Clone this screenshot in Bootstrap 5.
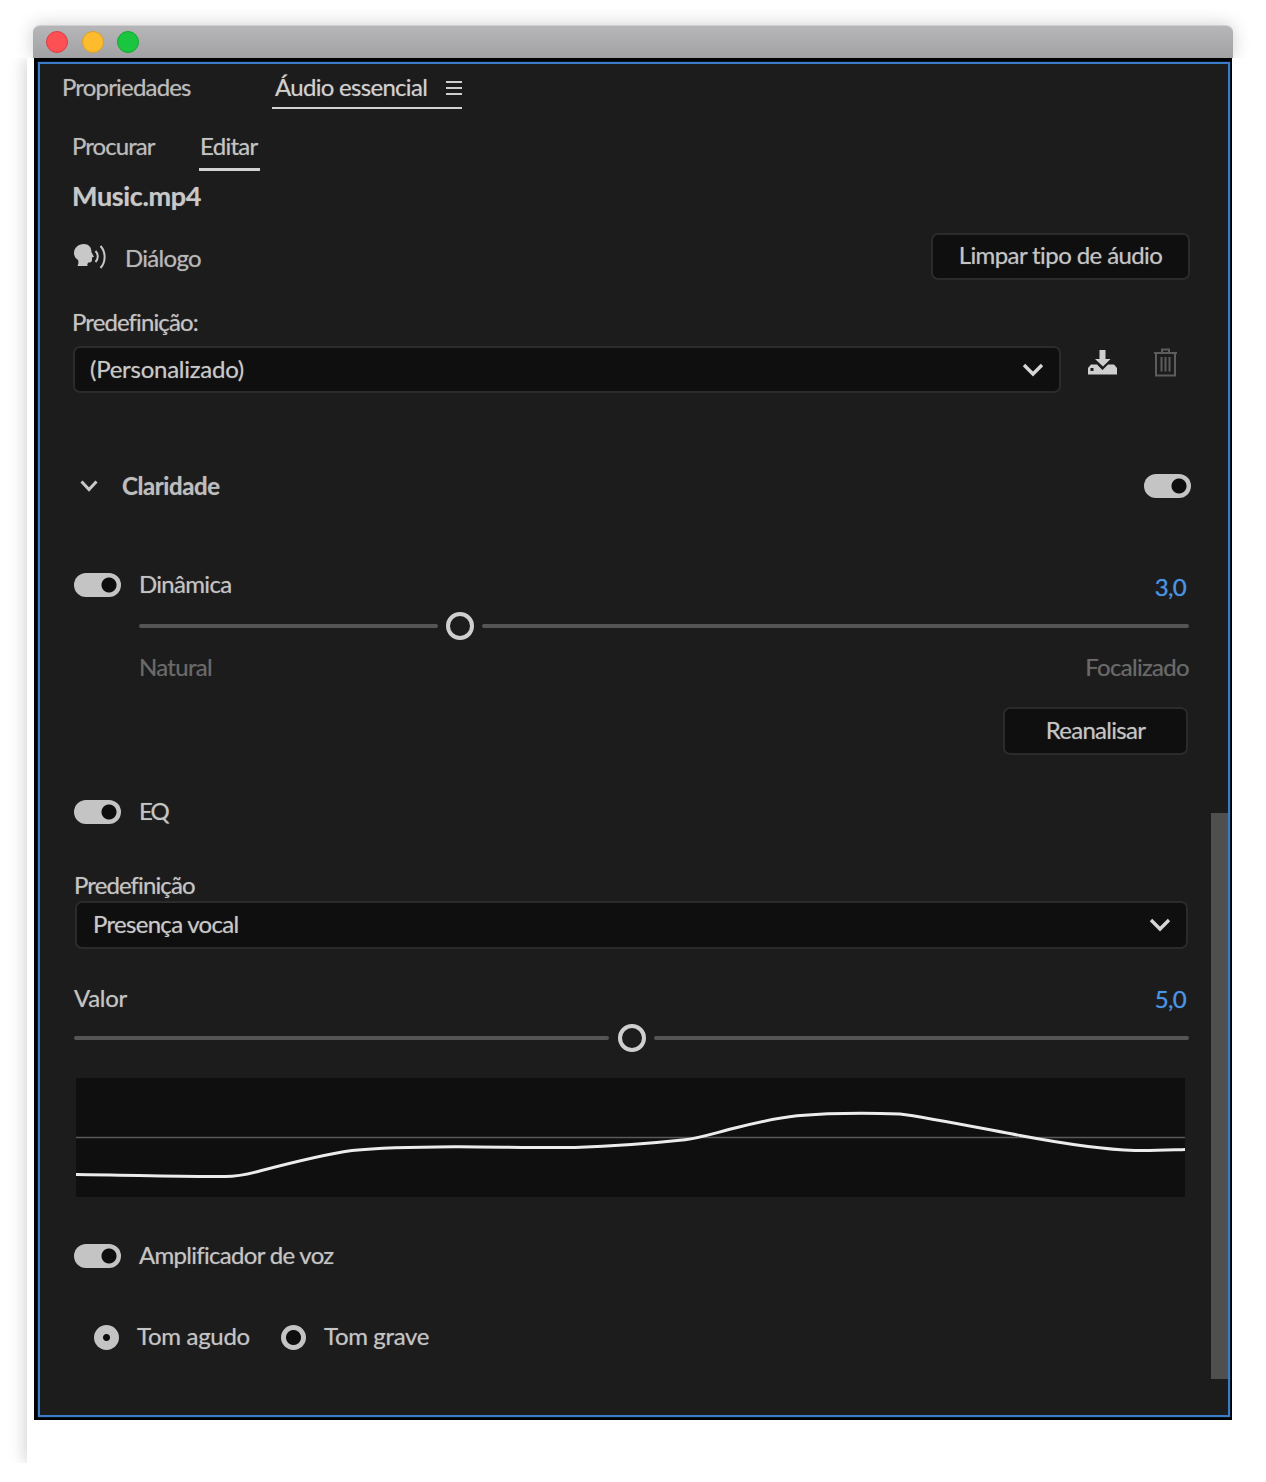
<!DOCTYPE html>
<html lang="pt">
<head>
<meta charset="utf-8">
<title>Áudio essencial</title>
<link href="https://cdn.jsdelivr.net/npm/bootstrap@5.3.0/dist/css/bootstrap.min.css" rel="stylesheet">
<style>
html,body{background:#fff;margin:0;height:1482px;overflow:hidden}
body{font-family:"Lato","Liberation Sans",sans-serif;font-size:24px;letter-spacing:-.7px;color:#c4c4c4;text-shadow:0 0 1px rgba(190,190,190,.55)}
.stage{padding:25px 0 0 27px;width:1233px}
.titlebar{margin-left:6px;width:1200px;height:33px;border-radius:7px 7px 0 0;background:linear-gradient(#b6b6b8,#a2a2a4);border-top:1px solid #cfcfcf;box-shadow:0 0 18px rgba(0,0,0,.2);clip-path:inset(-30px -30px 0 -30px);gap:14px;padding-left:13px}
.light{width:22px;height:22px;border-radius:50%;flex:none}
.l-r{background:#fc5055;border:1px solid #dc3c42}
.l-y{background:#fdbb2e;border:1px solid #dfa023;margin:0 -.5px}
.l-g{background:#1ac63f;border:1px solid #12a82e}
.sheet{width:1206px;height:1405px;padding-left:7px;background:#fff;box-shadow:-2px 0 16px rgba(0,0,0,.18);clip-path:inset(0 0 0 -30px)}
.shell{width:1198px;height:1362px;background:#000;padding:4px 2px 3px 4px}
.pane{height:100%;border:2px solid #3a7cc8;box-shadow:0 0 1px #3a7cc8;background:#1c1c1c;padding:0 38px 0 33px;overflow:hidden}
.scroll-thumb{position:absolute;right:0;top:749px;width:17px;height:566px;background:#4f4f4f}
.tabs-main{height:41px;margin-top:4px;margin-left:-11px}
.tab-a{height:41px;color:#bcbcbc;padding:0;line-height:37px;width:210px;letter-spacing:-.82px}
.tab-b{height:41px;width:190px;border-bottom:2px solid #d2d2d2;color:#d0d0d0;padding-left:3px;line-height:37px}
.tabs-sub{height:46px;margin-top:16px;margin-left:-1px}
.sub-a{height:46px;line-height:42px;width:127px;color:#bcbcbc;letter-spacing:-.95px}
.sub-b{height:46px;line-height:42px;width:61px;border-bottom:3px solid #d2d2d2;color:#c4c4c4;padding-left:1px}
.file-name{height:40px;line-height:40px;margin:5px 0 0 -1px;font-weight:700;font-size:27px;color:#c8c8c8;letter-spacing:-.35px}
.dlg-row{height:47px;margin-top:17px}
.dlg-label{gap:17px;color:#b8b8b8}
.dlg-label span{padding-top:2px}
.act{background:#0f0f0f;border:2px solid #2b2b2b;border-radius:7px;color:#c4c4c4;font-size:24px;letter-spacing:-.7px;padding:0 0 2px;height:48px;text-shadow:0 0 1px rgba(190,190,190,.55)}
.act:hover{background:#0f0f0f;color:#c4c4c4;border-color:#2b2b2b}
.act-clear{width:259px;height:47px;letter-spacing:-.6px;padding-bottom:4px}
.lbl{height:30px;line-height:28px;letter-spacing:-.9px}
.lbl-pre{margin:28px 0 0 -1px}
.sel-row{height:47px;margin-top:8px}
.pick{background-color:#0f0f0f;color:#c8c8c8;border:2px solid #2b2b2b;border-radius:7px;font-size:24px;letter-spacing:-.7px;padding:0 60px 2px 15px;background-position:right 14px center;background-size:24px 14px;background-image:url("data:image/svg+xml,%3csvg xmlns='http://www.w3.org/2000/svg' viewBox='0 0 24 14'%3e%3cpath fill='none' stroke='%23d6d6d6' stroke-width='3.4' d='M3 2l9 9 9-9'/%3e%3c/svg%3e");text-shadow:0 0 1px rgba(190,190,190,.55)}
.pick:focus{background-color:#0f0f0f;color:#c8c8c8;border-color:#2b2b2b;box-shadow:none}
.pick-a{width:988px;height:47px;letter-spacing:-.25px}
.pick-b{height:48px;padding-left:16px}
.tools{gap:36px;margin-left:27px;height:47px;padding-bottom:14px}
.sec-row{height:24px;margin-top:81px;margin-right:-1px}
.sec-name{gap:24px;padding-left:7px;font-weight:700;color:#bdbdbd;letter-spacing:-.4px}
.form-check-input.sw{width:47px;height:24px;margin:0;flex:none;border:0;border-radius:12px;appearance:none;background:radial-gradient(circle at 35px 12px,#0e0e0e 0,#0e0e0e 7px,#c4c4c4 8px)}
.form-check-input.sw:focus{box-shadow:none;border:0}
.opt-row{height:24px;gap:18px;margin-left:1px}
.lift{margin-top:-2px}
.m-dyn{margin-top:75px}
.m-eq{margin-top:45px}
.m-amp{margin-top:47px}
.val{color:#4a94e6;margin-left:auto;margin-right:4px;text-shadow:0 0 1px rgba(74,148,230,.7)}
.val-dyn{margin-top:3px}
.eq-name{letter-spacing:-2px}
.track{height:26px}
.track-a{margin:16px 1px 0 66px}
.track-b{margin:11px 1px 0 1px}
.rail{height:4px;background:#555;border-radius:2px}
.knob{width:28px;height:28px;flex:none;border-radius:50%;border:4px solid #cfcfcf;background:#1c1c1c;margin:0 8px}
.knob-b{margin:0 8px 0 9px}
.ends{height:30px;line-height:28px;margin:14px 1px 0 66px;color:#6a6a6a;text-shadow:0 0 1px rgba(100,100,100,.55)}
.re-wrap{margin-top:24px;margin-right:2px}
.act-re{width:185px}
.lbl-eq{margin:47px 0 0 1px}
.pick-wrap{margin:0 2px}
.val-row{height:30px;margin:35px 0 0 1px}
.val-name{letter-spacing:-.3px}
.curve{height:119px;margin:27px 5px 0 3px;background:#0f0f0f}
.curve svg{display:block}
.radios{height:26px;margin-top:56px;padding-left:21px}
.form-check-input.rad{width:25px;height:25px;margin:0;flex:none;appearance:none;border-radius:50%;border:0;background:radial-gradient(circle,#0e0e0e 0,#0e0e0e 7px,#c4c4c4 8px)}
.form-check-input.rad:checked{background:radial-gradient(circle,#0e0e0e 0,#0e0e0e 3px,#c4c4c4 4px)}
.form-check-input.rad:focus{box-shadow:none}
.rad-one{gap:5px;margin-right:32px;width:155px;flex:none;white-space:nowrap;letter-spacing:-.3px}
.rad-one span,.rad-two span{margin-left:13px}
.rad-two{gap:5px;flex:none;white-space:nowrap;letter-spacing:-.35px}
</style>
</head>
<body>
<div class="stage">
  <div class="titlebar d-flex align-items-center">
    <span class="light l-r"></span><span class="light l-y"></span><span class="light l-g"></span>
  </div>
  <div class="sheet">
    <div class="shell">
      <div class="pane position-relative">
        <div class="scroll-thumb"></div>

        <div class="tabs-main d-flex">
          <div class="tab-a">Propriedades</div>
          <div class="tab-b d-flex justify-content-between">
            <span>Áudio essencial</span>
            <svg width="16" height="16" viewBox="0 0 16 16" class="align-self-center"><path d="M0 2h16M0 8h16M0 14h16" stroke="#cfcfcf" stroke-width="2"/></svg>
          </div>
        </div>

        <div class="tabs-sub d-flex">
          <div class="sub-a">Procurar</div>
          <div class="sub-b">Editar</div>
        </div>

        <div class="file-name">Music.mp4</div>

        <div class="dlg-row d-flex justify-content-between align-items-center">
          <div class="dlg-label d-flex align-items-center">
            <svg width="35" height="28" viewBox="0 0 35 28">
              <path d="M11 1C5 1 1 5 1 10c0 3 1.500 5.500 4 7 .8 2 .5 4-.5 6h10c-.3-1.500 0-3 1-3.500 2 0 3.500-.5 3.500-2.500v-2.500l2-.7-2.500-4.500C18.500 4 15.500 1 11 1z" fill="#c8c8c8"/>
              <path d="M22.500 8c3 3 3 8 0 11M27.500 3c5.500 6 5.500 16 0 22" fill="none" stroke="#c8c8c8" stroke-width="2"/>
            </svg>
            <span>Diálogo</span>
          </div>
          <button type="button" class="btn act act-clear">Limpar tipo de áudio</button>
        </div>

        <div class="lbl lbl-pre">Predefinição:</div>
        <div class="sel-row d-flex">
          <select class="form-select pick pick-a"><option>(Personalizado)</option></select>
          <div class="tools d-flex align-items-center">
            <svg width="29" height="25" viewBox="0 0 29 25">
              <path d="M11.500 0h6v9h5l-7.500 7.500L7 9h4.500z" fill="#cfcfcf"/>
              <path d="M0 24.500V18l3-3.500h6l5.500 5.500L20 14.500h6l3 3.500v6.500z" fill="#cfcfcf"/>
              <rect x="2.500" y="18" width="3" height="3" fill="#1c1c1c"/>
            </svg>
            <svg width="25" height="29" viewBox="0 0 25 29" fill="none" stroke="#5c5c5c" stroke-width="2">
              <path d="M1 5h23M9 5V1.500h7V5M3 5v22.500h19V5M8.500 9v14.500M12.500 9v14.500M16.500 9v14.500"/>
            </svg>
          </div>
        </div>

        <div class="sec-row d-flex justify-content-between align-items-center">
          <div class="sec-name d-flex align-items-center">
            <svg width="18" height="12" viewBox="0 0 18 12"><path d="M1.500 1.500l7.500 8 7.500-8" fill="none" stroke="#c8c8c8" stroke-width="3"/></svg>
            <span>Claridade</span>
          </div>
          <input class="form-check-input sw" type="checkbox" checked aria-label="Claridade">
        </div>

        <div class="opt-row m-dyn d-flex align-items-center">
          <input class="form-check-input sw" type="checkbox" checked aria-label="Dinâmica">
          <span class="lift">Dinâmica</span>
          <span class="val val-dyn">3,0</span>
        </div>
        <div class="track track-a d-flex align-items-center">
          <div class="rail" style="width:299px"></div>
          <div class="knob"></div>
          <div class="rail flex-grow-1"></div>
        </div>
        <div class="ends d-flex justify-content-between"><span>Natural</span><span>Focalizado</span></div>
        <div class="re-wrap d-flex justify-content-end">
          <button type="button" class="btn act act-re">Reanalisar</button>
        </div>

        <div class="opt-row m-eq d-flex align-items-center">
          <input class="form-check-input sw" type="checkbox" checked aria-label="EQ">
          <span class="lift eq-name">EQ</span>
        </div>
        <div class="lbl lbl-eq">Predefinição</div>
        <div class="pick-wrap">
          <select class="form-select pick pick-b"><option>Presença vocal</option></select>
        </div>
        <div class="val-row d-flex align-items-center">
          <span class="lift val-name">Valor</span>
          <span class="val">5,0</span>
        </div>
        <div class="track track-b d-flex align-items-center">
          <div class="rail" style="width:535px"></div>
          <div class="knob knob-b"></div>
          <div class="rail flex-grow-1"></div>
        </div>
        <div class="curve">
          <svg width="1109" height="119" viewBox="76 1078 1109 119">
            <path d="M76 1137.500H1185" stroke="#5a5a5a" stroke-width="1.500"/>
            <path d="M76 1174.500C130 1175 180 1177 225 1176.500C236 1176.500 245 1175 258 1171.500C290 1163 320 1155 352 1150.500C390 1147 430 1147 460 1146.800C500 1147 540 1148 575 1147.500C620 1146 655 1143 685 1139.800C700 1138 715 1133 735 1128C755 1123 775 1118 797 1115.800C830 1113 870 1113 900 1114C925 1117 985 1129 1020 1135.500C1060 1143 1100 1149.500 1135 1150.500C1150 1151 1170 1150 1185 1149.500" fill="none" stroke="#ececec" stroke-width="3"/>
          </svg>
        </div>

        <div class="opt-row m-amp d-flex align-items-center">
          <input class="form-check-input sw" type="checkbox" checked aria-label="Amplificador de voz">
          <span class="lift">Amplificador de voz</span>
        </div>

        <div class="radios d-flex align-items-center">
          <label class="rad-one d-flex align-items-center"><input class="form-check-input rad" type="radio" name="tom" checked><span class="lift">Tom agudo</span></label>
          <label class="rad-two d-flex align-items-center"><input class="form-check-input rad" type="radio" name="tom"><span class="lift">Tom grave</span></label>
        </div>
      </div>
    </div>
  </div>
</div>
<script src="https://cdn.jsdelivr.net/npm/bootstrap@5.3.0/dist/js/bootstrap.bundle.min.js"></script>
</body>
</html>
